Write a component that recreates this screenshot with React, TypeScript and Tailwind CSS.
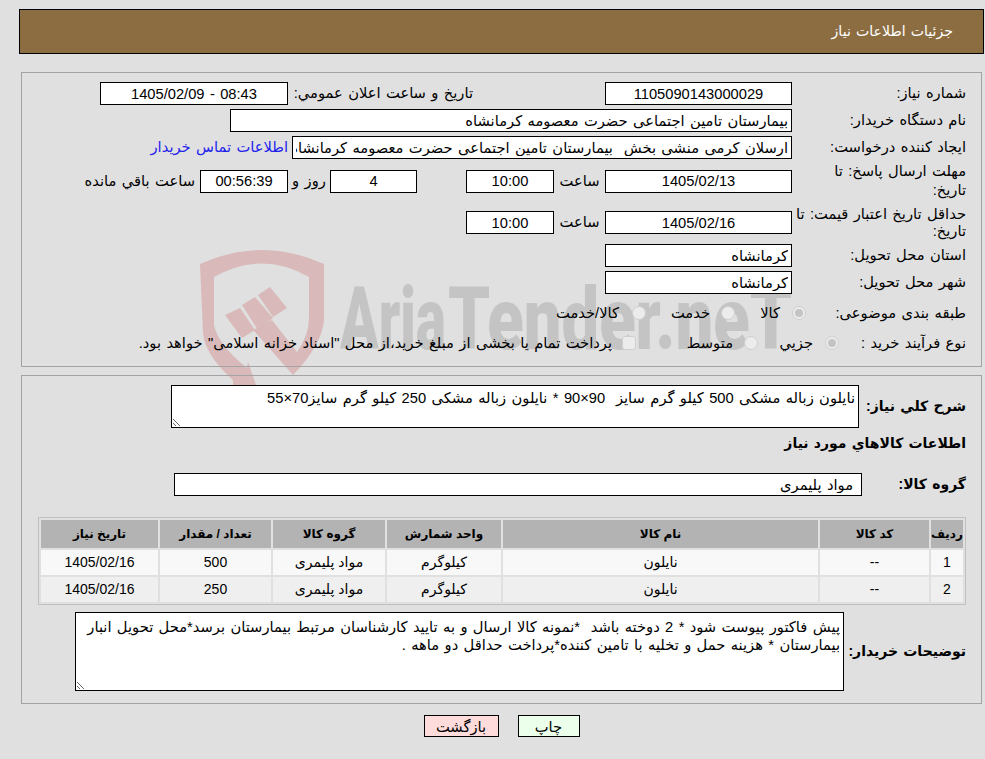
import React from 'react';

const rows = [
  { id: 1, code: '--', name: 'نایلون', unit: 'کیلوگرم', group: 'مواد پلیمری', qty: 500, date: '1405/02/16' },
  { id: 2, code: '--', name: 'نایلون', unit: 'کیلوگرم', group: 'مواد پلیمری', qty: 250, date: '1405/02/16' },
];

function Field({ value, className = '' }: { value: string; className?: string }) {
  return (
    <input
      readOnly
      value={value}
      className={`h-[23px] shrink-0 border border-black bg-white px-[3px] text-[14.7px] text-black outline-none [word-spacing:1.3px] ${className}`}
    />
  );
}

function Radio({ checked, className = '' }: { checked?: boolean; className?: string }) {
  return (
    <span className={`flex h-[14px] w-[14px] shrink-0 items-center justify-center rounded-full border border-[#cfcfcf] bg-[#ececec] ${className}`}>
      {checked && <span className="h-[8px] w-[8px] rounded-full bg-[#c4c4c4]" />}
    </span>
  );
}

function Watermark() {
  return (
    <svg className="absolute left-0 top-0 z-0" width="985" height="400" viewBox="0 0 985 400">
      <g fill="#d9b9b9">
        <path d="M200 264 Q262 236 324 264 L324 320 Q322 345 293 375 L278 358 L253 330 L272 320 L297 352 Q309 335 309 318 L309 277 Q262 250 214 277 L214 325 Q218 345 247 368 L248 362 L257 388 L233 388 L233 380 Q205 355 203 333 Z" />
        <path d="M225 315 L240 308 L255 330 L242 338 Z" />
        <path d="M242 305 L255 297 L273 318 L258 330 Z" />
        <path d="M258 295 L270 287 L287 308 L273 317 Z" />
      </g>
      <g direction="ltr" fill="#c4c4c4" fontFamily="Roboto, sans-serif" fontWeight="900" fontSize="88">
        <text x="340" y="349" textLength="106" lengthAdjust="spacingAndGlyphs">Aria</text>
        <text x="448" y="349" textLength="344" lengthAdjust="spacingAndGlyphs">Tender.neT</text>
      </g>
    </svg>
  );
}

export default function App() {
  return (
    <div dir="rtl" className="relative min-h-screen bg-[#e0e0e0] pl-[19px] pr-[1px] pt-[9px] font-['Liberation_Sans','DejaVu_Sans',sans-serif] text-[14.7px] text-black [word-spacing:1.3px]">
      <Watermark />

      <div className="relative z-10">
        <div className="flex h-[45px] items-center border border-black bg-[#8c6d42] pr-[30px] text-[14.1px] text-white">
          جزئیات اطلاعات نیاز
        </div>

        <div className="mx-[2px] mt-[18px] h-[295px] border border-[#a3a3a3] pr-[15px] pt-[9px]">
          <div className="flex h-[23px] items-center">
            <div className="w-[174px] shrink-0">شماره نیاز:</div>
            <Field value="1105090143000029" className="w-[187px] text-center" />
            <div className="mr-[132px] w-[185px] shrink-0">تاریخ و ساعت اعلان عمومي:</div>
            <Field value="08:43 - 1405/02/09" className="w-[188px] text-center" />
          </div>

          <div className="mt-[4px] flex h-[23px] items-center">
            <div className="w-[174px] shrink-0">نام دستگاه خریدار:</div>
            <Field value="بیمارستان تامین اجتماعی حضرت معصومه کرمانشاه" className="w-[562px]" />
          </div>

          <div className="mt-[4px] flex h-[23px] items-center">
            <div className="w-[174px] shrink-0">ایجاد کننده درخواست:</div>
            <Field value="ارسلان کرمی منشی بخش  بیمارستان تامین اجتماعی حضرت معصومه کرمانشاه" className="w-[500px]" />
            <a className="mr-[4px] text-[#2222ee]">اطلاعات تماس خریدار</a>
          </div>

          <div className="mt-[5px] flex h-[34px] items-center">
            <div className="w-[174px] shrink-0 leading-[19px]">مهلت ارسال پاسخ: تا<br />تاریخ:</div>
            <Field value="1405/02/13" className="h-[22px] w-[187px] text-center" />
            <div className="w-[51px] shrink-0 text-center">ساعت</div>
            <Field value="10:00" className="h-[22px] w-[88px] text-center" />
            <Field value="4" className="mr-[49px] h-[22px] w-[87px] text-center" />
            <div className="w-[42px] shrink-0 text-center">روز و</div>
            <Field value="00:56:39" className="h-[22px] w-[88px] bg-[#ffffee] text-center" />
            <div className="mr-[5px] shrink-0">ساعت باقي مانده</div>
          </div>

          <div className="mt-[7px] flex h-[35px] items-center">
            <div className="w-[174px] shrink-0 leading-[17px]">حداقل تاریخ اعتبار قیمت: تا<br />تاریخ:</div>
            <Field value="1405/02/16" className="w-[187px] text-center" />
            <div className="w-[51px] shrink-0 text-center">ساعت</div>
            <Field value="10:00" className="w-[88px] text-center" />
          </div>

          <div className="mt-[4px] flex h-[23px] items-center">
            <div className="w-[174px] shrink-0">استان محل تحویل:</div>
            <Field value="کرمانشاه" className="w-[187px]" />
          </div>

          <div className="mt-[4px] flex h-[23px] items-center">
            <div className="w-[174px] shrink-0">شهر محل تحویل:</div>
            <Field value="کرمانشاه" className="w-[187px]" />
          </div>

          <div className="mt-[6px] flex h-[26px] items-center">
            <div className="w-[160px] shrink-0">طبقه بندی موضوعی:</div>
            <Radio checked />
            <div className="mr-[12px] w-[45px] shrink-0">کالا</div>
            <Radio />
            <div className="mr-[11px] w-[64px] shrink-0">خدمت</div>
            <Radio />
            <div className="mr-[13px] shrink-0">کالا/خدمت</div>
          </div>

          <div className="mt-[4px] flex h-[26px] items-center">
            <div className="w-[127px] shrink-0">نوع فرآیند خرید :</div>
            <Radio checked />
            <div className="mr-[12px] w-[55px] shrink-0">جزيي</div>
            <Radio />
            <div className="mr-[11px] w-[97px] shrink-0">متوسط</div>
            <span className="h-[14px] w-[14px] shrink-0 rounded-[3px] border border-[#cfcfcf] bg-[#ececec]" />
            <div className="mr-[10px] shrink-0">پرداخت تمام یا بخشی از مبلغ خرید،از محل "اسناد خزانه اسلامی" خواهد بود.</div>
          </div>
        </div>

        <div className="mx-[2px] mt-[8px] h-[329px] border border-[#a3a3a3] pr-[15px] pt-[9px]">
          <div className="flex items-center">
            <div className="w-[107px] shrink-0 text-[14px] font-bold">شرح كلي نياز:</div>
            <textarea
              readOnly
              value="نایلون زباله مشکی 500 کیلو گرم سایز  90×90 * نایلون زباله مشکی 250 کیلو گرم سایز70×55"
              className="block h-[43px] w-[688px] border border-black bg-white pl-1 pr-[3px] pt-[3px] text-[14.7px] leading-[18px] outline-none [word-spacing:1.3px]"
            />
          </div>

          <div className="mt-[5px] h-[20px] text-[14px] font-bold leading-[20px]">اطلاعات كالاهاي مورد نياز</div>

          <div className="mt-[20px] flex items-center">
            <div className="w-[104px] shrink-0 text-[14px] font-bold">گروه کالا:</div>
            <Field value="مواد پلیمری" className="w-[688px] pr-[8px]" />
          </div>

          <table className="mt-[21px] w-[928px] table-fixed border-separate border-spacing-[2px] border border-[#c0c0c0] text-center text-[14px] [word-spacing:0]">
            <colgroup>
              <col className="w-[32px]" />
              <col className="w-[109px]" />
              <col className="w-[315px]" />
              <col className="w-[114px]" />
              <col className="w-[112px]" />
              <col className="w-[111px]" />
              <col className="w-[117px]" />
            </colgroup>
            <thead>
              <tr className="h-[28px] bg-[#b3b3b3] text-[12px] font-bold">
                <th className="p-0">ردیف</th>
                <th className="p-0">کد کالا</th>
                <th className="p-0">نام کالا</th>
                <th className="p-0">واحد شمارش</th>
                <th className="p-0">گروه کالا</th>
                <th className="p-0">تعداد / مقدار</th>
                <th className="p-0">تاریخ نیاز</th>
              </tr>
            </thead>
            <tbody>
              {rows.map((row, i) => (
                <tr key={row.id} className={`h-[25px] ${i === 0 ? 'bg-[#f8f8f8]' : 'bg-[#efefef]'}`}>
                  <td className="p-0">{row.id}</td>
                  <td className="p-0">{row.code}</td>
                  <td className="p-0">{row.name}</td>
                  <td className="p-0">{row.unit}</td>
                  <td className="p-0">{row.group}</td>
                  <td className="p-0">{row.qty}</td>
                  <td className="p-0">{row.date}</td>
                </tr>
              ))}
            </tbody>
          </table>

          <div className="mt-[7px] flex items-center">
            <div className="w-[122px] shrink-0 text-[14px] font-bold">توضیحات خریدار:</div>
            <textarea
              readOnly
              value="پیش فاکتور پیوست شود * 2 دوخته باشد  *نمونه کالا ارسال و به تایید کارشناسان مرتبط بیمارستان برسد*محل تحویل انبار بیمارستان * هزینه حمل و تخلیه با تامین کننده*پرداخت حداقل دو ماهه ."
              className="block h-[79px] w-[769px] border border-black bg-white pl-1 pr-[3px] pt-[5px] text-[14.7px] leading-[18px] outline-none [word-spacing:1.3px]"
            />
          </div>
        </div>

        <div className="mt-[11px] flex justify-center gap-[19px]">
          <button className="h-[22px] w-[62px] border border-black bg-[#ebffeb] text-[14.7px]">چاپ</button>
          <button className="h-[22px] w-[75px] border border-black bg-[#ffdcdc] text-[14.7px]">بازگشت</button>
        </div>
      </div>
    </div>
  );
}
